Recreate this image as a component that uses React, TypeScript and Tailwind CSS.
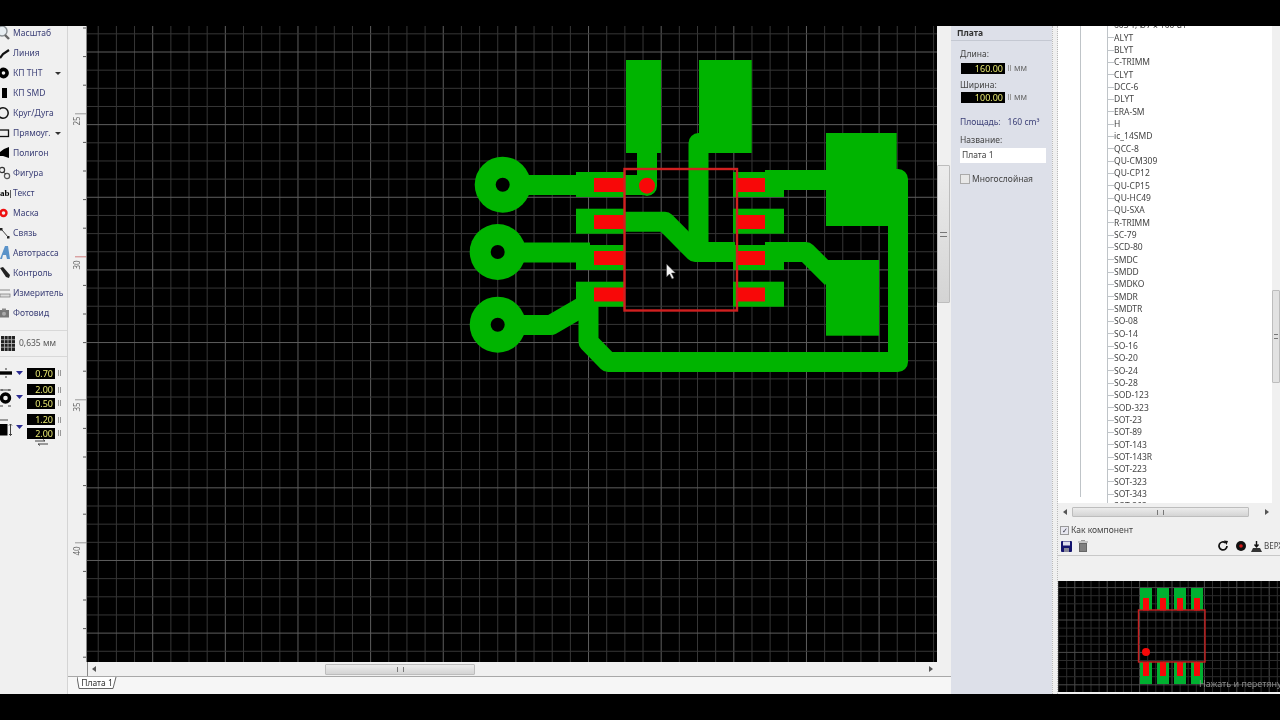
import type { ReactNode } from "react";

const GREEN = "#00b400";
const RED = "#f80808";

const treeItems = [
  "603 Т, Ø7 х 100 d1", "ALYT", "BLYT", "C-TRIMM", "CLYT", "DCC-6", "DLYT", "ERA-SM", "H", "ic_14SMD",
  "QCC-8", "QU-CM309", "QU-CP12", "QU-CP15", "QU-HC49", "QU-SXA", "R-TRIMM", "SC-79", "SCD-80",
  "SMDC", "SMDD", "SMDKO", "SMDR", "SMDTR", "SO-08", "SO-14", "SO-16", "SO-20", "SO-24", "SO-28",
  "SOD-123", "SOD-323", "SOT-23", "SOT-89", "SOT-143", "SOT-143R", "SOT-223", "SOT-323", "SOT-343", "SOT-363",
];

function Ico({ children }: { children: ReactNode }) {
  return (
    <svg width="13" height="16" viewBox="0 0 13 16" className="shrink-0">
      {children}
    </svg>
  );
}

const tools: { label: string; icon: ReactNode; arrow?: boolean }[] = [
  {
    label: "Масштаб",
    icon: (
      <Ico>
        <circle cx="2" cy="6" r="5" fill="#e8eef2" stroke="#8a9094" strokeWidth="1.4" />
        <path d="M5 10 L9 14" stroke="#666" strokeWidth="2.4" />
      </Ico>
    ),
  },
  { label: "Линия", icon: <Ico><path d="M0 13 L3 9 L9 5" stroke="#111" strokeWidth="2.2" fill="none" /></Ico> },
  {
    label: "КП ТНТ",
    arrow: true,
    icon: <Ico><circle cx="3.5" cy="8" r="3.6" fill="none" stroke="#000" strokeWidth="3.6" /></Ico>,
  },
  { label: "КП SMD", icon: <Ico><rect x="2" y="3" width="5" height="10" fill="#000" /></Ico> },
  { label: "Круг/Дуга", icon: <Ico><circle cx="3" cy="8" r="5.2" fill="none" stroke="#111" strokeWidth="1.5" /></Ico> },
  {
    label: "Прямоуг.",
    arrow: true,
    icon: <Ico><rect x="-1" y="5" width="9.5" height="6.5" fill="#eee" stroke="#111" strokeWidth="1.3" /></Ico>,
  },
  { label: "Полигон", icon: <Ico><path d="M0 7 L4 4 L9 2 L9 13 L3 11 L0 11 Z" fill="#000" /></Ico> },
  {
    label: "Фигура",
    icon: (
      <Ico>
        <circle cx="2" cy="5" r="2.6" fill="none" stroke="#333" strokeWidth="1.2" />
        <circle cx="7" cy="11" r="2.6" fill="none" stroke="#555" strokeWidth="1.2" />
        <path d="M3 7 L6 9" stroke="#333" />
      </Ico>
    ),
  },
  {
    label: "Текст",
    icon: <span className="w-[13px] shrink-0 font-['Liberation_Serif',serif] text-[9px] font-bold leading-none text-black">ab|</span>,
  },
  { label: "Маска", icon: <Ico><circle cx="3.5" cy="8" r="3" fill="none" stroke="#ee1010" strokeWidth="2.4" /></Ico> },
  {
    label: "Связь",
    icon: (
      <Ico>
        <rect x="0" y="3" width="2.5" height="2.5" fill="#222" />
        <rect x="7" y="11" width="2.5" height="2.5" fill="#222" />
        <path d="M2 5 L8 12" stroke="#444" />
      </Ico>
    ),
  },
  { label: "Автотрасса", icon: <Ico><path d="M0 14 L5 1 L8 1 L10 14 L7 14 L6 10 L3 10 L2 14 Z" fill="#5b93c9" /></Ico> },
  { label: "Контроль", icon: <Ico><path d="M0 3 L3 2 L10 10 L9 13 L6 12 Z" fill="#222" /></Ico> },
  {
    label: "Измеритель",
    icon: (
      <Ico>
        <path d="M0 5 H10" stroke="#888" />
        <rect x="0" y="9" width="10" height="3" fill="#ddd" stroke="#777" strokeWidth="0.7" />
      </Ico>
    ),
  },
  {
    label: "Фотовид",
    icon: (
      <Ico>
        <rect x="-1" y="5" width="10" height="7.5" fill="#777" />
        <rect x="2" y="3.5" width="4" height="2" fill="#888" />
        <circle cx="4" cy="8.7" r="2" fill="#aaa" />
      </Ico>
    ),
  },
];

function Field({ value, width = "w-[28px]" }: { value: string; width?: string }) {
  return (
    <div className={`${width} flex h-[11px] shrink-0 items-center justify-end bg-black pr-[2px] text-[9px] leading-none text-[#e8e870]`}>
      {value}
    </div>
  );
}

function Grip() {
  return <div className="ml-[3px] h-[6px] w-[3px] shrink-0 border-x border-[#999]" />;
}

function ParamRow({ icon, values, h }: { icon: ReactNode; values: string[]; h: string }) {
  return (
    <div className={`flex ${h} items-center`}>
      <div className="w-[16px] shrink-0">{icon}</div>
      <svg width="7" height="4" viewBox="0 0 7 4" className="mr-[4px] shrink-0">
        <path d="M0 0 H7 L3.5 4 Z" fill="#2a2a90" />
      </svg>
      <div className="flex flex-col gap-[2.5px]">
        {values.map((v, i) => (
          <div key={i} className="flex items-center">
            <Field value={v} />
            <Grip />
          </div>
        ))}
      </div>
    </div>
  );
}

function GridLines({ x0, y0, step, every, left, top, right, bottom, minor, major }: {
  x0: number; y0: number; step: number; every: number; left: number; top: number; right: number; bottom: number; minor: string; major: string;
}) {
  const xs = Array.from({ length: 200 }, (_, i) => i).filter((i) => x0 + (i - 100) * step >= left && x0 + (i - 100) * step <= right);
  const ys = Array.from({ length: 200 }, (_, i) => i).filter((i) => y0 + (i - 100) * step >= top && y0 + (i - 100) * step <= bottom);
  return (
    <g>
      {xs.map((i) => {
        const x = x0 + (i - 100) * step;
        return <line key={`x${i}`} x1={x} x2={x} y1={top} y2={bottom} stroke={i % every === 0 ? major : minor} />;
      })}
      {ys.map((i) => {
        const y = y0 + (i - 100) * step;
        return <line key={`y${i}`} y1={y} y2={y} x1={left} x2={right} stroke={i % every === 0 ? major : minor} />;
      })}
    </g>
  );
}

function Board() {
  const padYs = [172, 208.7, 245, 281.7];
  const redYs = [178, 215, 251, 287.5];
  return (
    <svg width="850" height="636" viewBox="87 26 850 636" className="block">
      <rect x="87" y="26" width="850" height="636" fill="#000" />
      <GridLines x0={152.7} y0={52} step={18.16} every={4} left={87} top={26} right={937} bottom={662} minor="#363636" major="#5e5e5e" />
      <g fill={GREEN}>
        <circle cx="502.7" cy="184.7" r="28" />
        <circle cx="497.7" cy="252" r="28" />
        <circle cx="497.7" cy="324.7" r="28" />
        {padYs.map((y) => (
          <g key={y}>
            <rect x="576" y={y} width="49" height="25" />
            <rect x="733" y={y} width="51" height="25" />
          </g>
        ))}
        <rect x="626" y="60" width="35" height="93" />
        <rect x="699" y="60" width="52.7" height="93" />
        <rect x="826" y="133" width="70.7" height="93" />
        <rect x="826" y="260" width="53" height="75.7" />
      </g>
      <g fill="none" stroke={GREEN} strokeWidth="20" strokeLinejoin="round" strokeLinecap="round">
        <path d="M647 150 V186" />
        <path d="M625 185 H647" strokeLinecap="butt" />
        <path d="M505 185 H580" strokeLinecap="butt" />
        <path d="M698.5 143 V252" />
        <path d="M625 221.7 H665 L695 252 H735" strokeLinecap="butt" />
        <path d="M765 180 H830" strokeLinecap="butt" />
        <path d="M590 252.5 H510" strokeLinecap="butt" />
        <path d="M765 252 H806 L832 278" strokeLinecap="butt" />
        <path d="M520 325 H551 L582 307" strokeLinecap="butt" />
        <path d="M588.5 295 V342 L608 362 H898 V179 H880" strokeLinecap="butt" />
      </g>
      <g fill="#000">
        <circle cx="502.7" cy="184.7" r="7" />
        <circle cx="497.7" cy="252" r="7" />
        <circle cx="497.7" cy="324.7" r="7" />
      </g>
      <g fill={RED}>
        {redYs.map((y) => (
          <g key={y}>
            <rect x="594" y={y} width="31" height="14" />
            <rect x="737" y={y} width="28" height="14" />
          </g>
        ))}
        <circle cx="647" cy="185.7" r="8" />
      </g>
      <rect x="624.5" y="169" width="112.5" height="141.5" fill="none" stroke="#d02020" strokeWidth="2.4" />
      <path d="M666.5 264 V277 L669.5 274 L672 279 L674 278 L671.5 273 L675.5 273 Z" fill="#f2f2f2" stroke="#333" strokeWidth="0.5" />
    </svg>
  );
}

function Preview() {
  const xs = [1140, 1157, 1174, 1191];
  return (
    <svg width="222" height="111" viewBox="1058 581 222 111" className="block">
      <rect x="1058" y="581" width="222" height="111" fill="#000" />
      <GridLines x0={1172} y0={620} step={8.1} every={4} left={1058} top={581} right={1280} bottom={692} minor="#2c2c2c" major="#4a4a4a" />
      {xs.map((x) => (
        <g key={x}>
          <rect x={x} y="588" width="12" height="22" fill="#00b030" />
          <rect x={x} y="662" width="12" height="22" fill="#00b030" />
          <rect x={x + 3} y="598" width="6" height="12.5" fill={RED} />
          <rect x={x + 3} y="662" width="6" height="14" fill={RED} />
        </g>
      ))}
      <rect x="1138.5" y="610" width="66.5" height="52" fill="none" stroke="#c82020" strokeWidth="1.4" />
      <circle cx="1146" cy="652" r="4" fill={RED} />
      <text x="1199" y="687" fontSize="9" fill="#8a8a8a">Нажать и перетянуть</text>
    </svg>
  );
}

function Ruler() {
  const ticks = Array.from({ length: 23 }, (_, i) => 28 + i * 28.6);
  return (
    <svg width="19" height="636" viewBox="68 26 19 636" className="block shrink-0">
      {ticks.map((y, i) => {
        const major = i % 5 === 3;
        const cursor = i === 8;
        return <line key={y} x1={major ? 75 : 83} x2="87" y1={y} y2={y} stroke={cursor ? "#d08080" : major ? "#999" : "#555"} />;
      })}
      {[["25", 121], ["30", 265], ["35", 407], ["40", 551]].map(([t, y]) => (
        <text key={t} x="0" y="0" fontSize="8" fill="#666" textAnchor="middle" transform={`translate(80 ${y}) rotate(-90)`}>
          {t}
        </text>
      ))}
      <line x1="86.5" x2="86.5" y1="26" y2="662" stroke="#888" />
    </svg>
  );
}

function HScrollArrow({ dir }: { dir: "l" | "r" }) {
  return (
    <svg width="5" height="6" viewBox="0 0 5 6" className="shrink-0">
      <path d={dir === "l" ? "M4 0 V6 L0 3 Z" : "M1 0 V6 L5 3 Z"} fill="#555" />
    </svg>
  );
}

function ScrollThumb({ className, vertical }: { className: string; vertical?: boolean }) {
  return (
    <div className={`flex items-center justify-center rounded-[1px] border border-[#bdbdbd] bg-gradient-to-b from-[#ececec] to-[#d4d4d4] ${className}`}>
      <div className={vertical ? "h-[5px] w-[7px] border-y border-[#777]" : "h-[5px] w-[7px] border-x border-[#777]"} />
    </div>
  );
}

export default function App() {
  return (
    <div className="flex h-[720px] w-[1280px] flex-col overflow-hidden bg-black font-['Noto_Sans',sans-serif] blur-[0.35px]">
      <div className="h-[26px] shrink-0 bg-black" />

      <div className="flex h-[668px] shrink-0">
        {/* left tools */}
        <div className="flex w-[68px] shrink-0 flex-col overflow-hidden border-r border-[#d4d4d4] bg-[#f0f0f0]">
          <div className="-mt-[3px] flex flex-col">
            {tools.map((t) => (
              <div key={t.label} className="flex h-[20px] items-center text-[8.5px] text-[#3d4178]">
                {t.icon}
                <span className="whitespace-nowrap">{t.label}</span>
                {t.arrow && (
                  <svg width="6" height="3" viewBox="0 0 6 3" className="ml-auto mr-[6px] shrink-0">
                    <path d="M0 0 H6 L3 3 Z" fill="#333" />
                  </svg>
                )}
              </div>
            ))}
          </div>

          <div className="mt-[7px] flex h-[27px] items-center gap-[4px] border-y border-[#d8d8d8] text-[8.5px] text-[#555]">
            <svg width="14" height="15" viewBox="0 0 14 15" className="ml-[1px] shrink-0">
              <rect width="14" height="15" fill="#222" />
              <path d="M3.5 0 V15 M7 0 V15 M10.5 0 V15 M0 3.7 H14 M0 7.5 H14 M0 11.2 H14" stroke="#bbb" strokeWidth="0.8" />
            </svg>
            <span className="whitespace-nowrap">0,635 мм</span>
          </div>

          <div className="mt-[10px] flex flex-col gap-[5px]">
            <ParamRow
              h="h-[12px]"
              values={["0.70"]}
              icon={
                <svg width="13" height="10" viewBox="0 0 13 10" className="block">
                  <path d="M0 5 H12" stroke="#000" strokeWidth="3.4" />
                  <path d="M6 0 V2 M6 8 V10" stroke="#333" />
                </svg>
              }
            />
            <ParamRow
              h="h-[25px]"
              values={["2.00", "0.50"]}
              icon={
                <svg width="13" height="22" viewBox="0 0 13 22" className="block">
                  <circle cx="5.5" cy="12" r="4" fill="none" stroke="#000" strokeWidth="3.4" />
                  <path d="M2 3 V5 M9 3 V5 M0 4 H11 M0 20 H3 M8 20 H11" stroke="#444" />
                </svg>
              }
            />
            <ParamRow
              h="h-[25px]"
              values={["1.20", "2.00"]}
              icon={
                <svg width="13" height="22" viewBox="0 0 13 22" className="block">
                  <rect x="0" y="8" width="7.5" height="11.5" fill="#000" />
                  <path d="M10.5 8 V19.5 M9 9.5 L10.5 8 L12 9.5 M9 18 L10.5 19.5 L12 18 M0 4 H8" stroke="#444" fill="none" />
                </svg>
              }
            />
          </div>
          <div className="flex justify-end pr-[18px]">
            <svg width="15" height="7" viewBox="0 0 15 7">
              <path d="M1 2 H11 L9 0.5 M14 5 H4 L6 6.5" stroke="#444" fill="none" />
            </svg>
          </div>
        </div>

        {/* canvas area */}
        <div className="flex w-[883px] shrink-0 flex-col bg-[#f0f0f0]">
          <div className="flex h-[636px]">
            <Ruler />
            <Board />
            <div className="flex w-[14px] flex-col pt-[139px]">
              <ScrollThumb className="h-[138px] w-[13px]" vertical />
            </div>
          </div>
          <div className="flex h-[15px] items-center border-b border-[#a8a8a8] pl-[19px]">
            <div className="flex h-full w-[850px] items-center border-l border-[#888] pl-[4px] pr-[4px]">
              <HScrollArrow dir="l" />
              <div className="ml-[228px] mr-auto">
                <ScrollThumb className="h-[11px] w-[150px]" />
              </div>
              <HScrollArrow dir="r" />
            </div>
          </div>
          <div className="flex h-[17px] bg-[#f6f6f6] pl-[9px]">
            <div className="relative flex h-[13px] w-[40px] items-center justify-center text-[8.5px] text-[#333]">
              <svg width="40" height="13" viewBox="0 0 40 13" className="absolute inset-0">
                <path d="M0 0 L2 11.5 H36 L39 0" fill="#fff" stroke="#666" />
              </svg>
              <span className="relative">Плата 1</span>
            </div>
          </div>
        </div>

        {/* board properties */}
        <div className="flex w-[101px] shrink-0 flex-col bg-[#dde0e9] text-[8.5px] text-[#444]">
          <div className="flex h-[15px] items-center border-b border-[#c4c8d2] pl-[6px] font-bold text-[#333]">Плата</div>
          <div className="flex flex-col pl-[9px] pr-[6px]">
            <div className="mt-[7px] leading-[12px]">Длина:</div>
            <div className="mt-[2px] ml-[1px] flex items-center">
              <Field value="160.00" width="w-[44px]" />
              <Grip />
              <span className="ml-[3px] text-[#666]">мм</span>
            </div>
            <div className="mt-[4px] leading-[12px]">Ширина:</div>
            <div className="ml-[1px] flex items-center">
              <Field value="100.00" width="w-[44px]" />
              <Grip />
              <span className="ml-[3px] text-[#666]">мм</span>
            </div>
            <div className="mt-[12px] flex gap-[7px] leading-[12px] text-[#3d4178]">
              <span>Площадь:</span>
              <span>160 cm³</span>
            </div>
            <div className="mt-[6px] leading-[12px]">Название:</div>
            <div className="mt-[2px] flex h-[15px] items-center bg-white pl-[2px] text-[#444]">Плата 1</div>
            <div className="mt-[10px] flex items-center gap-[2px]">
              <div className="h-[10px] w-[10px] border border-[#aaa] bg-[#e8e8e8]" />
              <span>Многослойная</span>
            </div>
          </div>
        </div>

        <div className="w-[6px] shrink-0 border-x border-dotted border-[#bbb] bg-[#f0f0f0]" />

        {/* component library */}
        <div className="flex w-[222px] shrink-0 flex-col bg-[#f0f0f0] text-[8.5px] text-[#444]">
          <div className="flex h-[477px] shrink-0 overflow-hidden bg-white">
            <div className="min-w-0 flex-1 pl-[22px]">
              <div className="h-full border-l border-[#bfc4c8] pl-[26px]">
                <div className="-mt-[6.5px] border-l border-[#bfc4c8]">
                  {treeItems.map((name) => (
                    <div key={name} className="flex h-[12.33px] items-center whitespace-nowrap leading-none">
                      <span className="h-px w-[6px] shrink-0 bg-[#bfc4c8]" />
                      {name}
                    </div>
                  ))}
                </div>
              </div>
            </div>
            <div className="flex w-[8px] shrink-0 flex-col bg-[#f0f0f0] pt-[264px]">
              <div className="flex h-[93px] items-center justify-center rounded-[1px] border border-[#bdbdbd] bg-[#e2e2e2]">
                <div className="h-[5px] w-[4px] border-y border-[#777]" />
              </div>
            </div>
          </div>

          <div className="flex h-[14px] shrink-0 items-end bg-[#f0f0f0] pl-[5px]">
            <div className="flex h-[10px] items-center">
              <HScrollArrow dir="l" />
              <ScrollThumb className="ml-[4px] h-[10px] w-[177px]" />
              <div className="ml-[15px]">
                <HScrollArrow dir="r" />
              </div>
            </div>
          </div>

          <div className="flex h-[39px] shrink-0 flex-col border-b border-[#c8c8c8] pl-[2px]">
            <div className="mt-[7px] flex h-[12px] items-center gap-[2px]">
              <div className="flex h-[9px] w-[9px] items-center justify-center border border-[#999] bg-[#e8e8f0] text-[7px] leading-none text-[#334]">✓</div>
              <span>Как компонент</span>
            </div>
            <div className="mt-[4px] flex items-center pl-[1px]">
              <svg width="11" height="11" viewBox="0 0 11 11" className="shrink-0">
                <rect width="11" height="11" rx="1" fill="#14146e" />
                <rect x="2" y="0.5" width="7" height="4" fill="#dde" />
                <rect x="3" y="7" width="5" height="4" fill="#889" />
              </svg>
              <svg width="10" height="12" viewBox="0 0 10 12" className="ml-[6px] shrink-0">
                <rect x="1" y="3" width="8" height="9" fill="#666" />
                <path d="M0 2 H10 M3 0.5 H7 M3 4 V11 M5 4 V11 M7 4 V11" stroke="#999" />
              </svg>
              <svg width="12" height="12" viewBox="0 0 12 12" className="ml-[129px] shrink-0">
                <path d="M10 6 A4 4 0 1 1 8.5 2.8" fill="none" stroke="#111" strokeWidth="1.7" />
                <path d="M7 0.5 L11 1 L9.5 5 Z" fill="#111" />
              </svg>
              <svg width="10" height="10" viewBox="0 0 10 10" className="ml-[7px] shrink-0">
                <circle cx="5" cy="5" r="5" fill="#111" />
                <circle cx="5" cy="5" r="1.8" fill="#d01818" />
              </svg>
              <svg width="11" height="11" viewBox="0 0 11 11" className="ml-[5px] shrink-0">
                <path d="M5.5 0 V5 M3.5 3.5 L5.5 6 L7.5 3.5" stroke="#111" strokeWidth="1.4" fill="none" />
                <path d="M2 7 H9 L11 11 H0 Z" fill="#333" />
              </svg>
              <span className="ml-[2px] whitespace-nowrap text-[8px]">ВЕРХ</span>
            </div>
          </div>

          <div className="h-[25px] shrink-0" />
          <Preview />
        </div>
      </div>

      <div className="flex-1 bg-black" />
    </div>
  );
}
